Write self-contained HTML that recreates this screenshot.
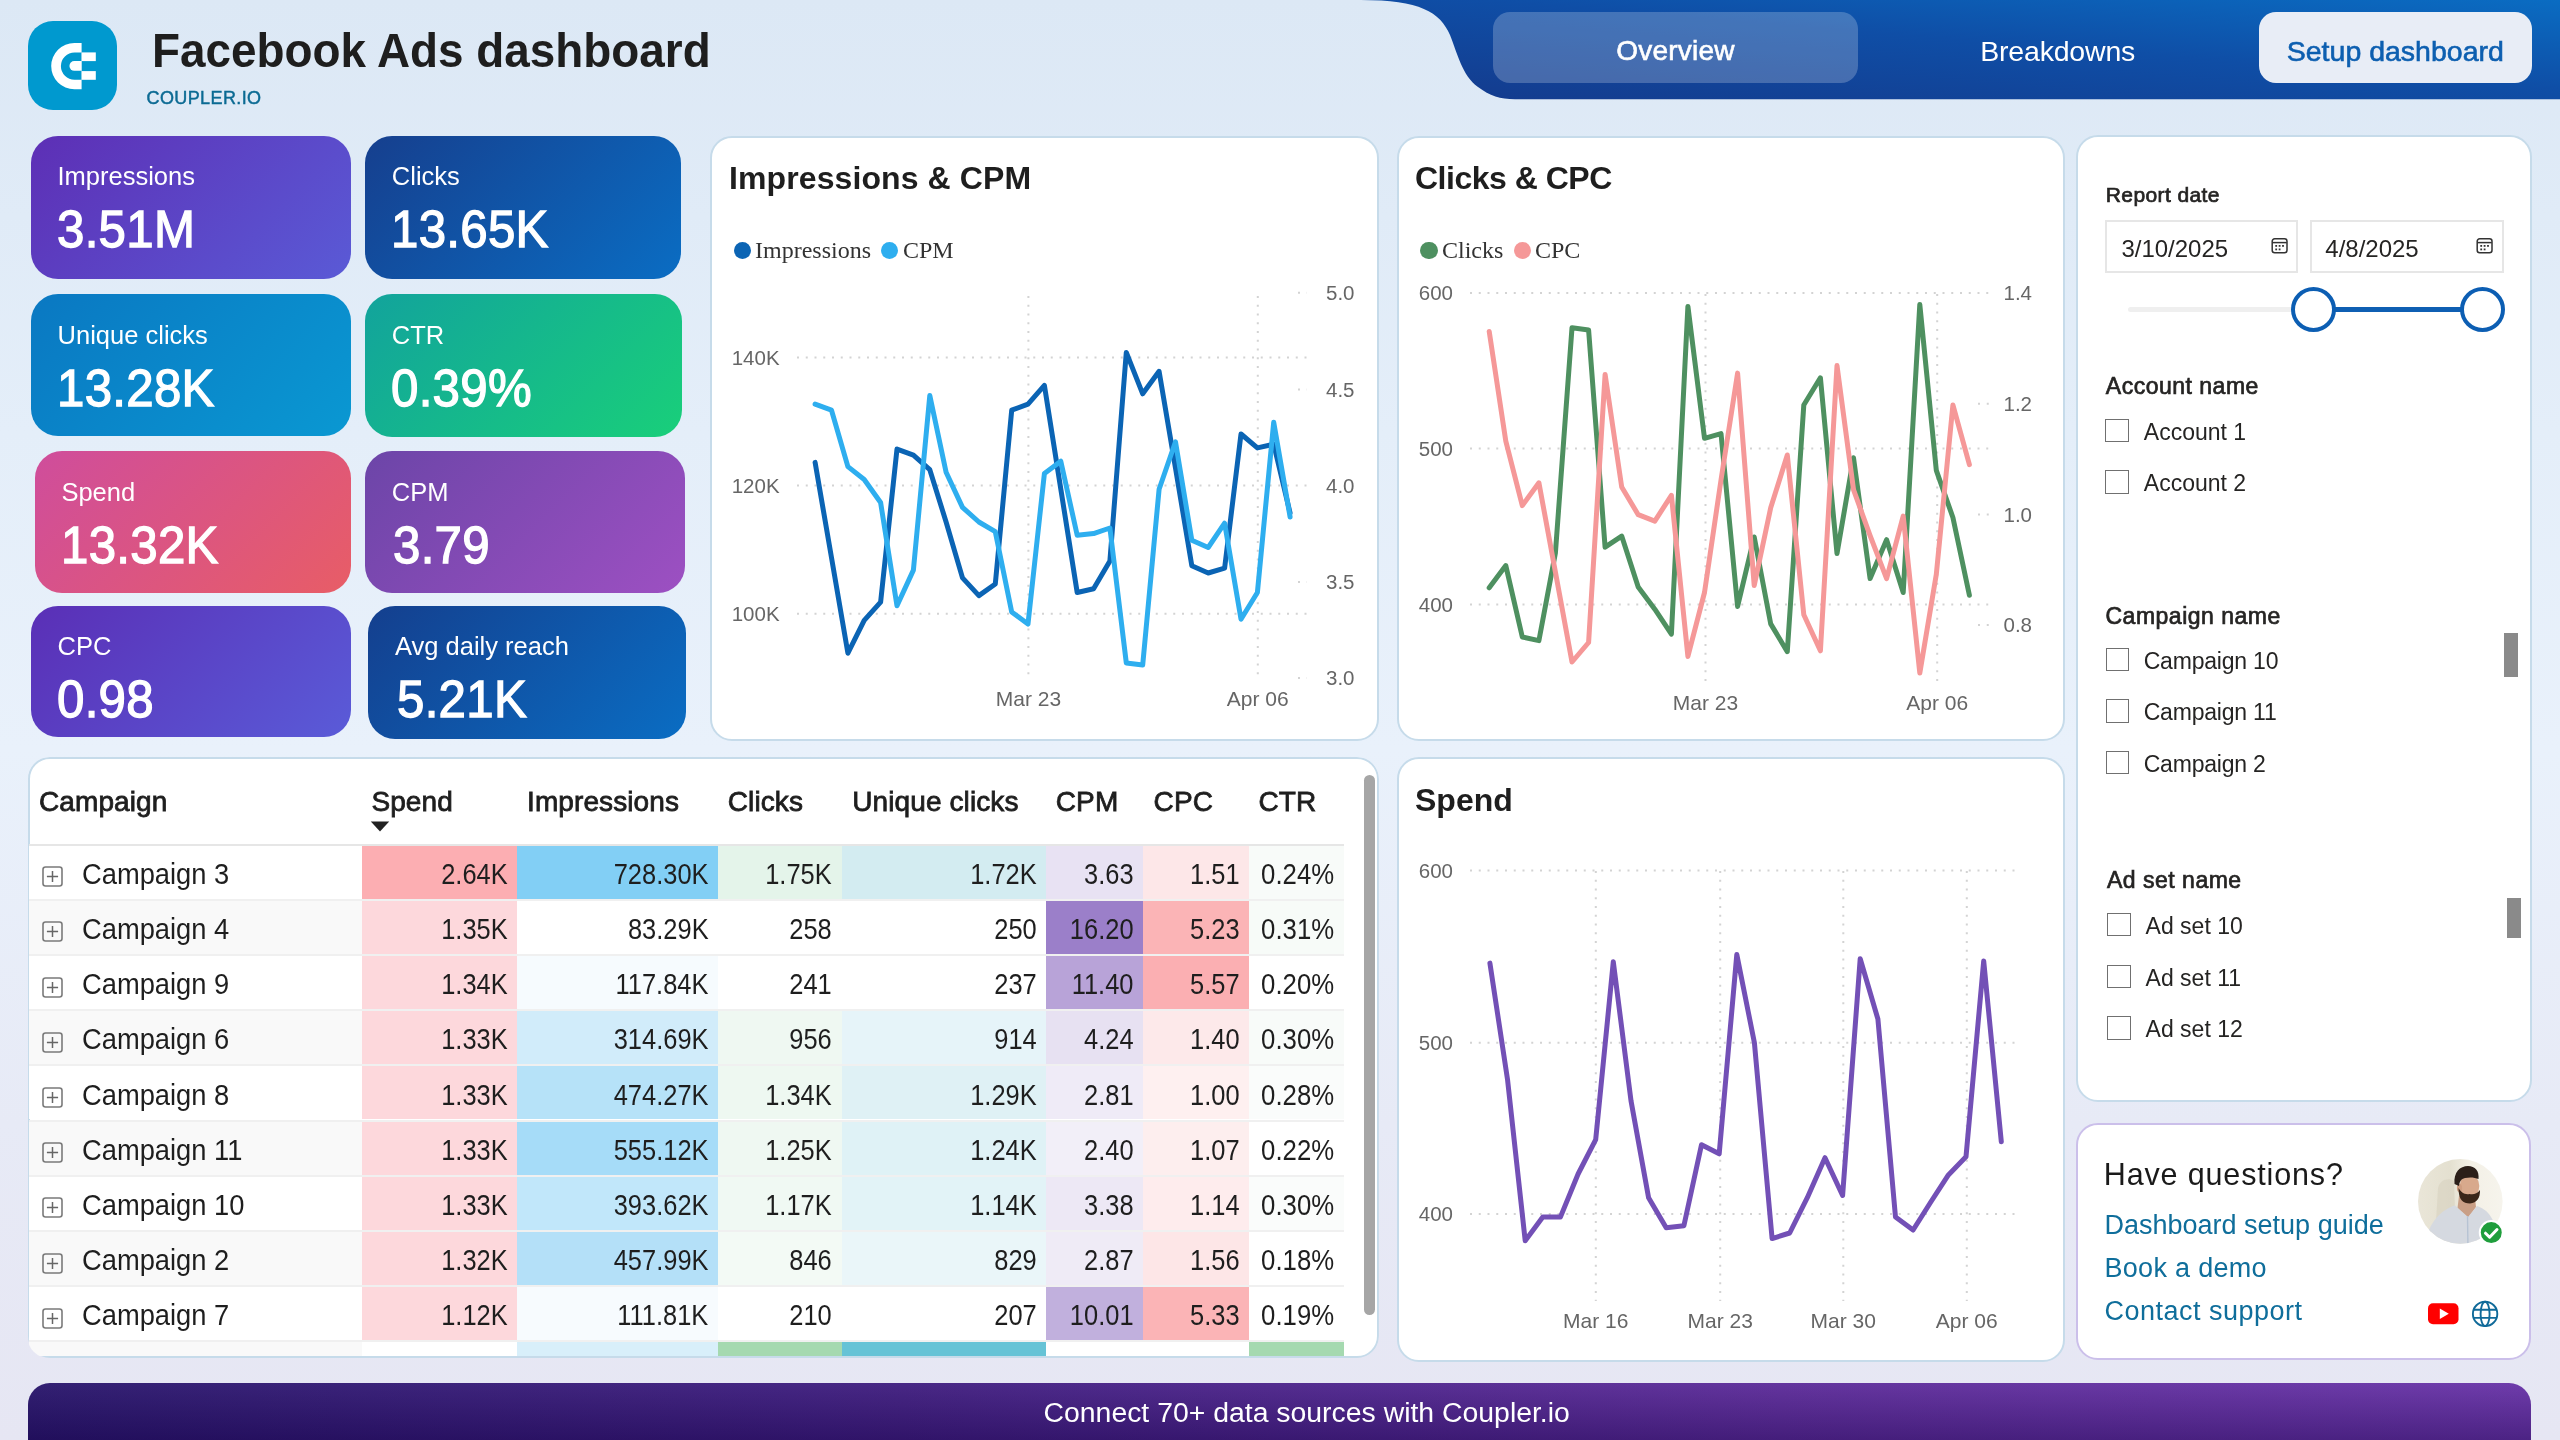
<!DOCTYPE html><html><head><meta charset="utf-8"><style>
html,body{margin:0;padding:0;}
body{width:2560px;height:1440px;overflow:hidden;position:relative;
background:linear-gradient(180deg,#dce8f5 0%,#e4eef9 30%,#e9f1fb 52%,#e7eaf6 78%,#e6e6f3 100%);font-family:"Liberation Sans",sans-serif;}
.t{position:absolute;white-space:nowrap;line-height:1;}
.card{position:absolute;background:#fff;border:2px solid #cde0ef;border-radius:22px;box-sizing:border-box;}
</style></head><body>

<div style="position:absolute;left:0;top:0;width:2560px;height:1440px;overflow:hidden;will-change:transform">
<svg style="position:absolute;left:0;top:0" width="200" height="130" viewBox="0 0 200 130">
<rect x="28" y="21" width="89" height="89" rx="25" fill="#0099cf"/>
<path d="M81.6 42.9 H74.4 A23.2 23.2 0 0 0 74.4 89.3 H81.6 Z" fill="#fff"/>
<path d="M81.6 52.4 H74.6 A13.7 13.7 0 0 0 74.6 79.8 H81.6 Z" fill="#0099cf"/>
<path d="M81.6 61.1 H74.3 A4.85 4.85 0 0 0 74.3 70.8 H81.6 Z" fill="#fff"/>
<rect x="81.6" y="52.4" width="14.2" height="8.7" fill="#fff"/>
<rect x="81.6" y="71.1" width="14.2" height="8.7" fill="#fff"/>
</svg>
<div class="t" style="left:152.0px;top:26.9px;font-size:48px;color:#1e1e1e;font-weight:700;letter-spacing:0px;font-family:'Liberation Sans', sans-serif;transform:scaleX(0.955);transform-origin:left center;">Facebook Ads dashboard</div>
<div class="t" style="left:146.5px;top:88.8px;font-size:18px;color:#0b6a93;font-weight:400;letter-spacing:0.4px;font-family:'Liberation Sans', sans-serif;-webkit-text-stroke:0.45px #0b6a93;">COUPLER.IO</div>
<svg style="position:absolute;left:0;top:0" width="2560" height="110" viewBox="0 0 2560 110">
<defs><linearGradient id="hg" x1="0" y1="1" x2="1" y2="0" gradientUnits="objectBoundingBox">
<stop offset="0" stop-color="#143a8c"/><stop offset="0.55" stop-color="#0f4ea6"/><stop offset="1" stop-color="#0a6cc2"/></linearGradient></defs>
<path d="M1361 0 C1420 0 1440 12 1450 35 C1458 55 1462 75 1478 87 C1490 96 1500 99 1515 99.3 L2560 99.3 L2560 0 Z" fill="url(#hg)"/>
</svg>
<div style="position:absolute;left:1493.0px;top:12.0px;width:365.0px;height:71.0px;border-radius:17px;background:rgba(255,255,255,0.22);"></div>
<div class="t" style="left:1075.5px;width:1200px;text-align:center;top:36.5px;font-size:28px;color:#ffffff;font-weight:400;letter-spacing:0.2px;font-family:'Liberation Sans', sans-serif;-webkit-text-stroke:0.6px #fff;">Overview</div>
<div class="t" style="left:1457.7px;width:1200px;text-align:center;top:36.5px;font-size:28.5px;color:#ffffff;font-weight:400;letter-spacing:-0.2px;font-family:'Liberation Sans', sans-serif;">Breakdowns</div>
<div style="position:absolute;left:2259.0px;top:12.0px;width:273.0px;height:71.0px;border-radius:17px;background:#e8edf6;"></div>
<div class="t" style="left:1795.3px;width:1200px;text-align:center;top:36.5px;font-size:28.5px;color:#0d5fb0;font-weight:400;letter-spacing:0px;font-family:'Liberation Sans', sans-serif;-webkit-text-stroke:0.6px #0d5fb0;">Setup dashboard</div>
<div style="position:absolute;left:31.0px;top:136.0px;width:320.0px;height:143.0px;border-radius:27px;background:linear-gradient(135deg,#5d2fb5 0%,#5a5ad6 100%);"></div>
<div class="t" style="left:57.5px;top:164.0px;font-size:25.5px;color:#ffffff;font-weight:400;letter-spacing:0px;font-family:'Liberation Sans', sans-serif;">Impressions</div>
<div class="t" style="left:57.1px;top:203.2px;font-size:52px;color:#ffffff;font-weight:400;letter-spacing:0.3px;font-family:'Liberation Sans', sans-serif;-webkit-text-stroke:1.3px #fff;transform:scaleX(0.946);transform-origin:left center;">3.51M</div>
<div style="position:absolute;left:364.5px;top:136.0px;width:316.5px;height:143.0px;border-radius:27px;background:linear-gradient(135deg,#163f8e 0%,#0a6dc3 100%);"></div>
<div class="t" style="left:391.8px;top:164.0px;font-size:25.5px;color:#ffffff;font-weight:400;letter-spacing:0px;font-family:'Liberation Sans', sans-serif;">Clicks</div>
<div class="t" style="left:391.3px;top:203.2px;font-size:52px;color:#ffffff;font-weight:400;letter-spacing:0.3px;font-family:'Liberation Sans', sans-serif;-webkit-text-stroke:1.3px #fff;transform:scaleX(0.946);transform-origin:left center;">13.65K</div>
<div style="position:absolute;left:31.0px;top:294.0px;width:320.0px;height:142.0px;border-radius:27px;background:linear-gradient(135deg,#0a78c2 0%,#0a98d2 100%);"></div>
<div class="t" style="left:57.6px;top:322.6px;font-size:25.5px;color:#ffffff;font-weight:400;letter-spacing:0px;font-family:'Liberation Sans', sans-serif;">Unique clicks</div>
<div class="t" style="left:57.1px;top:361.8px;font-size:52px;color:#ffffff;font-weight:400;letter-spacing:0.3px;font-family:'Liberation Sans', sans-serif;-webkit-text-stroke:1.3px #fff;transform:scaleX(0.946);transform-origin:left center;">13.28K</div>
<div style="position:absolute;left:365.0px;top:294.0px;width:317.3px;height:143.0px;border-radius:27px;background:linear-gradient(135deg,#12a39c 0%,#19cf7a 100%);"></div>
<div class="t" style="left:391.8px;top:322.6px;font-size:25.5px;color:#ffffff;font-weight:400;letter-spacing:0px;font-family:'Liberation Sans', sans-serif;">CTR</div>
<div class="t" style="left:391.3px;top:361.8px;font-size:52px;color:#ffffff;font-weight:400;letter-spacing:0.3px;font-family:'Liberation Sans', sans-serif;-webkit-text-stroke:1.3px #fff;transform:scaleX(0.946);transform-origin:left center;">0.39%</div>
<div style="position:absolute;left:34.7px;top:450.5px;width:316.3px;height:142.2px;border-radius:27px;background:linear-gradient(135deg,#cf4d9c 0%,#e85d66 100%);"></div>
<div class="t" style="left:61.4px;top:479.5px;font-size:25.5px;color:#ffffff;font-weight:400;letter-spacing:0px;font-family:'Liberation Sans', sans-serif;">Spend</div>
<div class="t" style="left:60.9px;top:518.6px;font-size:52px;color:#ffffff;font-weight:400;letter-spacing:0.3px;font-family:'Liberation Sans', sans-serif;-webkit-text-stroke:1.3px #fff;transform:scaleX(0.946);transform-origin:left center;">13.32K</div>
<div style="position:absolute;left:365.0px;top:450.5px;width:320.0px;height:142.2px;border-radius:27px;background:linear-gradient(135deg,#6c45a8 0%,#9d50c2 100%);"></div>
<div class="t" style="left:391.8px;top:479.5px;font-size:25.5px;color:#ffffff;font-weight:400;letter-spacing:0px;font-family:'Liberation Sans', sans-serif;">CPM</div>
<div class="t" style="left:392.5px;top:518.6px;font-size:52px;color:#ffffff;font-weight:400;letter-spacing:0.3px;font-family:'Liberation Sans', sans-serif;-webkit-text-stroke:1.3px #fff;transform:scaleX(0.946);transform-origin:left center;">3.79</div>
<div style="position:absolute;left:31.0px;top:606.0px;width:320.0px;height:131.0px;border-radius:27px;background:linear-gradient(135deg,#5a2fb6 0%,#5a5bd8 100%);"></div>
<div class="t" style="left:57.6px;top:634.0px;font-size:25.5px;color:#ffffff;font-weight:400;letter-spacing:0px;font-family:'Liberation Sans', sans-serif;">CPC</div>
<div class="t" style="left:57.1px;top:672.6px;font-size:52px;color:#ffffff;font-weight:400;letter-spacing:0.3px;font-family:'Liberation Sans', sans-serif;-webkit-text-stroke:1.3px #fff;transform:scaleX(0.946);transform-origin:left center;">0.98</div>
<div style="position:absolute;left:368.0px;top:606.0px;width:318.0px;height:133.0px;border-radius:27px;background:linear-gradient(135deg,#143f8e 0%,#0a6dc3 100%);"></div>
<div class="t" style="left:395.0px;top:634.0px;font-size:25.5px;color:#ffffff;font-weight:400;letter-spacing:0px;font-family:'Liberation Sans', sans-serif;">Avg daily reach</div>
<div class="t" style="left:396.5px;top:672.6px;font-size:52px;color:#ffffff;font-weight:400;letter-spacing:0.3px;font-family:'Liberation Sans', sans-serif;-webkit-text-stroke:1.3px #fff;transform:scaleX(0.946);transform-origin:left center;">5.21K</div>
<div style="position:absolute;left:710.3px;top:135.7px;width:668.4px;height:604.9px;background:#fff;border:2px solid #c6dbea;border-radius:22px;box-sizing:border-box;"></div>
<div class="t" style="left:729.0px;top:161.9px;font-size:32px;color:#1e1e1e;font-weight:700;letter-spacing:0.1px;font-family:'Liberation Sans', sans-serif;">Impressions &amp; CPM</div>
<div style="position:absolute;left:733.6px;top:241.9px;width:17.2px;height:17.2px;border-radius:50%;background:#0b64b4;"></div>
<div class="t" style="left:755.0px;top:238.0px;font-size:24px;color:#333;font-weight:400;letter-spacing:0px;font-family:'Liberation Serif', serif;">Impressions</div>
<div style="position:absolute;left:880.8px;top:241.9px;width:17.2px;height:17.2px;border-radius:50%;background:#2eaeef;"></div>
<div class="t" style="left:903.0px;top:238.0px;font-size:24px;color:#333;font-weight:400;letter-spacing:0px;font-family:'Liberation Serif', serif;">CPM</div>
<div class="t" style="right:1780.4px;top:347.6px;font-size:20.5px;color:#666666;font-weight:400;letter-spacing:0px;font-family:'Liberation Sans', sans-serif;">140K</div>
<div class="t" style="right:1780.4px;top:475.6px;font-size:20.5px;color:#666666;font-weight:400;letter-spacing:0px;font-family:'Liberation Sans', sans-serif;">120K</div>
<div class="t" style="right:1780.4px;top:603.9px;font-size:20.5px;color:#666666;font-weight:400;letter-spacing:0px;font-family:'Liberation Sans', sans-serif;">100K</div>
<div class="t" style="left:1326.0px;top:282.8px;font-size:20.5px;color:#666666;font-weight:400;letter-spacing:0px;font-family:'Liberation Sans', sans-serif;">5.0</div>
<div class="t" style="left:1326.0px;top:379.7px;font-size:20.5px;color:#666666;font-weight:400;letter-spacing:0px;font-family:'Liberation Sans', sans-serif;">4.5</div>
<div class="t" style="left:1326.0px;top:475.7px;font-size:20.5px;color:#666666;font-weight:400;letter-spacing:0px;font-family:'Liberation Sans', sans-serif;">4.0</div>
<div class="t" style="left:1326.0px;top:572.1px;font-size:20.5px;color:#666666;font-weight:400;letter-spacing:0px;font-family:'Liberation Sans', sans-serif;">3.5</div>
<div class="t" style="left:1326.0px;top:668.1px;font-size:20.5px;color:#666666;font-weight:400;letter-spacing:0px;font-family:'Liberation Sans', sans-serif;">3.0</div>
<div class="t" style="left:428.4px;width:1200px;text-align:center;top:688.2px;font-size:21px;color:#666666;font-weight:400;letter-spacing:0px;font-family:'Liberation Sans', sans-serif;">Mar 23</div>
<div class="t" style="left:657.8px;width:1200px;text-align:center;top:688.2px;font-size:21px;color:#666666;font-weight:400;letter-spacing:0px;font-family:'Liberation Sans', sans-serif;">Apr 06</div>
<div style="position:absolute;left:1396.7px;top:135.7px;width:668.8px;height:604.9px;background:#fff;border:2px solid #c6dbea;border-radius:22px;box-sizing:border-box;"></div>
<div class="t" style="left:1415.0px;top:161.9px;font-size:32px;color:#1e1e1e;font-weight:700;letter-spacing:-0.5px;font-family:'Liberation Sans', sans-serif;">Clicks &amp; CPC</div>
<div style="position:absolute;left:1420.4px;top:241.9px;width:17.2px;height:17.2px;border-radius:50%;background:#4e9060;"></div>
<div class="t" style="left:1442.0px;top:238.0px;font-size:24px;color:#333;font-weight:400;letter-spacing:0px;font-family:'Liberation Serif', serif;">Clicks</div>
<div style="position:absolute;left:1513.7px;top:241.9px;width:17.2px;height:17.2px;border-radius:50%;background:#f59898;"></div>
<div class="t" style="left:1535.0px;top:238.0px;font-size:24px;color:#333;font-weight:400;letter-spacing:0px;font-family:'Liberation Serif', serif;">CPC</div>
<div class="t" style="right:1107.0px;top:283.1px;font-size:20.5px;color:#666666;font-weight:400;letter-spacing:0px;font-family:'Liberation Sans', sans-serif;">600</div>
<div class="t" style="right:1107.0px;top:438.7px;font-size:20.5px;color:#666666;font-weight:400;letter-spacing:0px;font-family:'Liberation Sans', sans-serif;">500</div>
<div class="t" style="right:1107.0px;top:594.5px;font-size:20.5px;color:#666666;font-weight:400;letter-spacing:0px;font-family:'Liberation Sans', sans-serif;">400</div>
<div class="t" style="right:528.0px;top:282.8px;font-size:20.5px;color:#666666;font-weight:400;letter-spacing:0px;font-family:'Liberation Sans', sans-serif;">1.4</div>
<div class="t" style="right:528.0px;top:393.9px;font-size:20.5px;color:#666666;font-weight:400;letter-spacing:0px;font-family:'Liberation Sans', sans-serif;">1.2</div>
<div class="t" style="right:528.0px;top:504.5px;font-size:20.5px;color:#666666;font-weight:400;letter-spacing:0px;font-family:'Liberation Sans', sans-serif;">1.0</div>
<div class="t" style="right:528.0px;top:615.1px;font-size:20.5px;color:#666666;font-weight:400;letter-spacing:0px;font-family:'Liberation Sans', sans-serif;">0.8</div>
<div class="t" style="left:1105.5px;width:1200px;text-align:center;top:692.2px;font-size:21px;color:#666666;font-weight:400;letter-spacing:0px;font-family:'Liberation Sans', sans-serif;">Mar 23</div>
<div class="t" style="left:1337.2px;width:1200px;text-align:center;top:692.2px;font-size:21px;color:#666666;font-weight:400;letter-spacing:0px;font-family:'Liberation Sans', sans-serif;">Apr 06</div>
<div style="position:absolute;left:1396.7px;top:756.9px;width:668.8px;height:604.7px;background:#fff;border:2px solid #c6dbea;border-radius:22px;box-sizing:border-box;"></div>
<div class="t" style="left:1415.0px;top:783.9px;font-size:32px;color:#1e1e1e;font-weight:700;letter-spacing:0px;font-family:'Liberation Sans', sans-serif;">Spend</div>
<div class="t" style="right:1107.0px;top:860.6px;font-size:20.5px;color:#666666;font-weight:400;letter-spacing:0px;font-family:'Liberation Sans', sans-serif;">600</div>
<div class="t" style="right:1107.0px;top:1032.8px;font-size:20.5px;color:#666666;font-weight:400;letter-spacing:0px;font-family:'Liberation Sans', sans-serif;">500</div>
<div class="t" style="right:1107.0px;top:1204.1px;font-size:20.5px;color:#666666;font-weight:400;letter-spacing:0px;font-family:'Liberation Sans', sans-serif;">400</div>
<div class="t" style="left:995.8px;width:1200px;text-align:center;top:1310.2px;font-size:21px;color:#666666;font-weight:400;letter-spacing:0px;font-family:'Liberation Sans', sans-serif;">Mar 16</div>
<div class="t" style="left:1120.2px;width:1200px;text-align:center;top:1310.2px;font-size:21px;color:#666666;font-weight:400;letter-spacing:0px;font-family:'Liberation Sans', sans-serif;">Mar 23</div>
<div class="t" style="left:1243.3px;width:1200px;text-align:center;top:1310.2px;font-size:21px;color:#666666;font-weight:400;letter-spacing:0px;font-family:'Liberation Sans', sans-serif;">Mar 30</div>
<div class="t" style="left:1366.8px;width:1200px;text-align:center;top:1310.2px;font-size:21px;color:#666666;font-weight:400;letter-spacing:0px;font-family:'Liberation Sans', sans-serif;">Apr 06</div>
<div style="position:absolute;left:0;top:0;width:2560px;height:1440px;clip-path:inset(756.9px 1181.1px 81.5px 27.5px round 22px)">
<div style="position:absolute;left:27.5px;top:756.9px;width:1351.4px;height:601.6px;background:#fff;border:2px solid #c6dbea;border-radius:22px;box-sizing:border-box;"></div>
<div class="t" style="left:39.0px;top:787.8px;font-size:28px;color:#1e1e1e;font-weight:400;letter-spacing:0.1px;font-family:'Liberation Sans', sans-serif;-webkit-text-stroke:0.8px #1e1e1e;">Campaign</div>
<div class="t" style="left:371.4px;top:787.8px;font-size:28px;color:#1e1e1e;font-weight:400;letter-spacing:0.1px;font-family:'Liberation Sans', sans-serif;-webkit-text-stroke:0.8px #1e1e1e;">Spend</div>
<div class="t" style="left:527.0px;top:787.8px;font-size:28px;color:#1e1e1e;font-weight:400;letter-spacing:0.1px;font-family:'Liberation Sans', sans-serif;-webkit-text-stroke:0.8px #1e1e1e;">Impressions</div>
<div class="t" style="left:727.8px;top:787.8px;font-size:28px;color:#1e1e1e;font-weight:400;letter-spacing:0.1px;font-family:'Liberation Sans', sans-serif;-webkit-text-stroke:0.8px #1e1e1e;">Clicks</div>
<div class="t" style="left:852.3px;top:787.8px;font-size:28px;color:#1e1e1e;font-weight:400;letter-spacing:0.1px;font-family:'Liberation Sans', sans-serif;-webkit-text-stroke:0.8px #1e1e1e;">Unique clicks</div>
<div class="t" style="left:1055.8px;top:787.8px;font-size:28px;color:#1e1e1e;font-weight:400;letter-spacing:0.1px;font-family:'Liberation Sans', sans-serif;-webkit-text-stroke:0.8px #1e1e1e;">CPM</div>
<div class="t" style="left:1153.6px;top:787.8px;font-size:28px;color:#1e1e1e;font-weight:400;letter-spacing:0.1px;font-family:'Liberation Sans', sans-serif;-webkit-text-stroke:0.8px #1e1e1e;">CPC</div>
<div class="t" style="left:1258.5px;top:787.8px;font-size:28px;color:#1e1e1e;font-weight:400;letter-spacing:0.1px;font-family:'Liberation Sans', sans-serif;-webkit-text-stroke:0.8px #1e1e1e;">CTR</div>
<svg style="position:absolute;left:369px;top:819px" width="22" height="16" viewBox="0 0 22 16"><path d="M1.8 2.6 H20.2 L11 12.6 Z" fill="#222"/></svg>
<div style="position:absolute;left:29.0px;top:843.5px;width:1315.0px;height:2.0px;background:#e6e6e6;"></div>
<div style="position:absolute;left:29.0px;top:845.5px;width:333.0px;height:53.2px;background:#ffffff;"></div>
<div style="position:absolute;left:362.0px;top:845.5px;width:155.0px;height:53.2px;background:#fcaeb2;"></div>
<div style="position:absolute;left:517.0px;top:845.5px;width:201.0px;height:53.2px;background:#82cff5;"></div>
<div style="position:absolute;left:718.0px;top:845.5px;width:123.5px;height:53.2px;background:#e4f4ea;"></div>
<div style="position:absolute;left:841.5px;top:845.5px;width:204.5px;height:53.2px;background:#d3ecf1;"></div>
<div style="position:absolute;left:1046.0px;top:845.5px;width:97.4px;height:53.2px;background:#e8e2f3;"></div>
<div style="position:absolute;left:1143.4px;top:845.5px;width:105.6px;height:53.2px;background:#fde7e8;"></div>
<div style="position:absolute;left:1249.0px;top:845.5px;width:95.0px;height:53.2px;background:#f8fbf9;"></div>
<div style="position:absolute;left:29.0px;top:898.7px;width:1315.0px;height:2.0px;background:#f0f0f0;"></div>
<svg style="position:absolute;left:42px;top:866.1px" width="22" height="22" viewBox="0 0 22 22"><rect x="1" y="1" width="19" height="19" rx="2.5" fill="none" stroke="#7a7a7a" stroke-width="1.6"/><path d="M10.5 4.9 V16.1 M4.9 10.5 H16.1" stroke="#666" stroke-width="1.5"/></svg>
<div class="t" style="left:81.5px;top:859.8px;font-size:28.6px;color:#1e1e1e;font-weight:400;letter-spacing:0px;font-family:'Liberation Sans', sans-serif;transform:scaleX(0.955);transform-origin:left center;">Campaign 3</div>
<div class="t" style="right:2052.5px;top:859.8px;font-size:28.6px;color:#1e1e1e;font-weight:400;letter-spacing:0px;font-family:'Liberation Sans', sans-serif;transform:scaleX(0.89);transform-origin:right center;">2.64K</div>
<div class="t" style="right:1851.5px;top:859.8px;font-size:28.6px;color:#1e1e1e;font-weight:400;letter-spacing:0px;font-family:'Liberation Sans', sans-serif;transform:scaleX(0.89);transform-origin:right center;">728.30K</div>
<div class="t" style="right:1728.0px;top:859.8px;font-size:28.6px;color:#1e1e1e;font-weight:400;letter-spacing:0px;font-family:'Liberation Sans', sans-serif;transform:scaleX(0.89);transform-origin:right center;">1.75K</div>
<div class="t" style="right:1523.5px;top:859.8px;font-size:28.6px;color:#1e1e1e;font-weight:400;letter-spacing:0px;font-family:'Liberation Sans', sans-serif;transform:scaleX(0.89);transform-origin:right center;">1.72K</div>
<div class="t" style="right:1426.1px;top:859.8px;font-size:28.6px;color:#1e1e1e;font-weight:400;letter-spacing:0px;font-family:'Liberation Sans', sans-serif;transform:scaleX(0.89);transform-origin:right center;">3.63</div>
<div class="t" style="right:1320.5px;top:859.8px;font-size:28.6px;color:#1e1e1e;font-weight:400;letter-spacing:0px;font-family:'Liberation Sans', sans-serif;transform:scaleX(0.89);transform-origin:right center;">1.51</div>
<div class="t" style="right:1226.0px;top:859.8px;font-size:28.6px;color:#1e1e1e;font-weight:400;letter-spacing:0px;font-family:'Liberation Sans', sans-serif;transform:scaleX(0.9);transform-origin:right center;">0.24%</div>
<div style="position:absolute;left:29.0px;top:900.7px;width:333.0px;height:53.2px;background:#f9f9f9;"></div>
<div style="position:absolute;left:362.0px;top:900.7px;width:155.0px;height:53.2px;background:#fdd8dc;"></div>
<div style="position:absolute;left:517.0px;top:900.7px;width:201.0px;height:53.2px;background:#ffffff;"></div>
<div style="position:absolute;left:718.0px;top:900.7px;width:123.5px;height:53.2px;background:#ffffff;"></div>
<div style="position:absolute;left:841.5px;top:900.7px;width:204.5px;height:53.2px;background:#ffffff;"></div>
<div style="position:absolute;left:1046.0px;top:900.7px;width:97.4px;height:53.2px;background:#9b7fc9;"></div>
<div style="position:absolute;left:1143.4px;top:900.7px;width:105.6px;height:53.2px;background:#fbb4b6;"></div>
<div style="position:absolute;left:1249.0px;top:900.7px;width:95.0px;height:53.2px;background:#f7fbf8;"></div>
<div style="position:absolute;left:29.0px;top:953.9px;width:1315.0px;height:2.0px;background:#f0f0f0;"></div>
<svg style="position:absolute;left:42px;top:921.3px" width="22" height="22" viewBox="0 0 22 22"><rect x="1" y="1" width="19" height="19" rx="2.5" fill="none" stroke="#7a7a7a" stroke-width="1.6"/><path d="M10.5 4.9 V16.1 M4.9 10.5 H16.1" stroke="#666" stroke-width="1.5"/></svg>
<div class="t" style="left:81.5px;top:915.0px;font-size:28.6px;color:#1e1e1e;font-weight:400;letter-spacing:0px;font-family:'Liberation Sans', sans-serif;transform:scaleX(0.955);transform-origin:left center;">Campaign 4</div>
<div class="t" style="right:2052.5px;top:915.0px;font-size:28.6px;color:#1e1e1e;font-weight:400;letter-spacing:0px;font-family:'Liberation Sans', sans-serif;transform:scaleX(0.89);transform-origin:right center;">1.35K</div>
<div class="t" style="right:1851.5px;top:915.0px;font-size:28.6px;color:#1e1e1e;font-weight:400;letter-spacing:0px;font-family:'Liberation Sans', sans-serif;transform:scaleX(0.89);transform-origin:right center;">83.29K</div>
<div class="t" style="right:1728.0px;top:915.0px;font-size:28.6px;color:#1e1e1e;font-weight:400;letter-spacing:0px;font-family:'Liberation Sans', sans-serif;transform:scaleX(0.89);transform-origin:right center;">258</div>
<div class="t" style="right:1523.5px;top:915.0px;font-size:28.6px;color:#1e1e1e;font-weight:400;letter-spacing:0px;font-family:'Liberation Sans', sans-serif;transform:scaleX(0.89);transform-origin:right center;">250</div>
<div class="t" style="right:1426.1px;top:915.0px;font-size:28.6px;color:#1e1e1e;font-weight:400;letter-spacing:0px;font-family:'Liberation Sans', sans-serif;transform:scaleX(0.89);transform-origin:right center;">16.20</div>
<div class="t" style="right:1320.5px;top:915.0px;font-size:28.6px;color:#1e1e1e;font-weight:400;letter-spacing:0px;font-family:'Liberation Sans', sans-serif;transform:scaleX(0.89);transform-origin:right center;">5.23</div>
<div class="t" style="right:1226.0px;top:915.0px;font-size:28.6px;color:#1e1e1e;font-weight:400;letter-spacing:0px;font-family:'Liberation Sans', sans-serif;transform:scaleX(0.9);transform-origin:right center;">0.31%</div>
<div style="position:absolute;left:29.0px;top:955.9px;width:333.0px;height:53.2px;background:#ffffff;"></div>
<div style="position:absolute;left:362.0px;top:955.9px;width:155.0px;height:53.2px;background:#fdd8dc;"></div>
<div style="position:absolute;left:517.0px;top:955.9px;width:201.0px;height:53.2px;background:#f6fbfe;"></div>
<div style="position:absolute;left:718.0px;top:955.9px;width:123.5px;height:53.2px;background:#ffffff;"></div>
<div style="position:absolute;left:841.5px;top:955.9px;width:204.5px;height:53.2px;background:#ffffff;"></div>
<div style="position:absolute;left:1046.0px;top:955.9px;width:97.4px;height:53.2px;background:#b8a3d8;"></div>
<div style="position:absolute;left:1143.4px;top:955.9px;width:105.6px;height:53.2px;background:#fbafb2;"></div>
<div style="position:absolute;left:1249.0px;top:955.9px;width:95.0px;height:53.2px;background:#ffffff;"></div>
<div style="position:absolute;left:29.0px;top:1009.1px;width:1315.0px;height:2.0px;background:#f0f0f0;"></div>
<svg style="position:absolute;left:42px;top:976.5px" width="22" height="22" viewBox="0 0 22 22"><rect x="1" y="1" width="19" height="19" rx="2.5" fill="none" stroke="#7a7a7a" stroke-width="1.6"/><path d="M10.5 4.9 V16.1 M4.9 10.5 H16.1" stroke="#666" stroke-width="1.5"/></svg>
<div class="t" style="left:81.5px;top:970.2px;font-size:28.6px;color:#1e1e1e;font-weight:400;letter-spacing:0px;font-family:'Liberation Sans', sans-serif;transform:scaleX(0.955);transform-origin:left center;">Campaign 9</div>
<div class="t" style="right:2052.5px;top:970.2px;font-size:28.6px;color:#1e1e1e;font-weight:400;letter-spacing:0px;font-family:'Liberation Sans', sans-serif;transform:scaleX(0.89);transform-origin:right center;">1.34K</div>
<div class="t" style="right:1851.5px;top:970.2px;font-size:28.6px;color:#1e1e1e;font-weight:400;letter-spacing:0px;font-family:'Liberation Sans', sans-serif;transform:scaleX(0.89);transform-origin:right center;">117.84K</div>
<div class="t" style="right:1728.0px;top:970.2px;font-size:28.6px;color:#1e1e1e;font-weight:400;letter-spacing:0px;font-family:'Liberation Sans', sans-serif;transform:scaleX(0.89);transform-origin:right center;">241</div>
<div class="t" style="right:1523.5px;top:970.2px;font-size:28.6px;color:#1e1e1e;font-weight:400;letter-spacing:0px;font-family:'Liberation Sans', sans-serif;transform:scaleX(0.89);transform-origin:right center;">237</div>
<div class="t" style="right:1426.1px;top:970.2px;font-size:28.6px;color:#1e1e1e;font-weight:400;letter-spacing:0px;font-family:'Liberation Sans', sans-serif;transform:scaleX(0.89);transform-origin:right center;">11.40</div>
<div class="t" style="right:1320.5px;top:970.2px;font-size:28.6px;color:#1e1e1e;font-weight:400;letter-spacing:0px;font-family:'Liberation Sans', sans-serif;transform:scaleX(0.89);transform-origin:right center;">5.57</div>
<div class="t" style="right:1226.0px;top:970.2px;font-size:28.6px;color:#1e1e1e;font-weight:400;letter-spacing:0px;font-family:'Liberation Sans', sans-serif;transform:scaleX(0.9);transform-origin:right center;">0.20%</div>
<div style="position:absolute;left:29.0px;top:1011.1px;width:333.0px;height:53.2px;background:#f9f9f9;"></div>
<div style="position:absolute;left:362.0px;top:1011.1px;width:155.0px;height:53.2px;background:#fdd8dc;"></div>
<div style="position:absolute;left:517.0px;top:1011.1px;width:201.0px;height:53.2px;background:#d1ecfa;"></div>
<div style="position:absolute;left:718.0px;top:1011.1px;width:123.5px;height:53.2px;background:#eff8f2;"></div>
<div style="position:absolute;left:841.5px;top:1011.1px;width:204.5px;height:53.2px;background:#e6f4f9;"></div>
<div style="position:absolute;left:1046.0px;top:1011.1px;width:97.4px;height:53.2px;background:#e7e1f2;"></div>
<div style="position:absolute;left:1143.4px;top:1011.1px;width:105.6px;height:53.2px;background:#fde9ea;"></div>
<div style="position:absolute;left:1249.0px;top:1011.1px;width:95.0px;height:53.2px;background:#f8fbf9;"></div>
<div style="position:absolute;left:29.0px;top:1064.3px;width:1315.0px;height:2.0px;background:#f0f0f0;"></div>
<svg style="position:absolute;left:42px;top:1031.7px" width="22" height="22" viewBox="0 0 22 22"><rect x="1" y="1" width="19" height="19" rx="2.5" fill="none" stroke="#7a7a7a" stroke-width="1.6"/><path d="M10.5 4.9 V16.1 M4.9 10.5 H16.1" stroke="#666" stroke-width="1.5"/></svg>
<div class="t" style="left:81.5px;top:1025.4px;font-size:28.6px;color:#1e1e1e;font-weight:400;letter-spacing:0px;font-family:'Liberation Sans', sans-serif;transform:scaleX(0.955);transform-origin:left center;">Campaign 6</div>
<div class="t" style="right:2052.5px;top:1025.4px;font-size:28.6px;color:#1e1e1e;font-weight:400;letter-spacing:0px;font-family:'Liberation Sans', sans-serif;transform:scaleX(0.89);transform-origin:right center;">1.33K</div>
<div class="t" style="right:1851.5px;top:1025.4px;font-size:28.6px;color:#1e1e1e;font-weight:400;letter-spacing:0px;font-family:'Liberation Sans', sans-serif;transform:scaleX(0.89);transform-origin:right center;">314.69K</div>
<div class="t" style="right:1728.0px;top:1025.4px;font-size:28.6px;color:#1e1e1e;font-weight:400;letter-spacing:0px;font-family:'Liberation Sans', sans-serif;transform:scaleX(0.89);transform-origin:right center;">956</div>
<div class="t" style="right:1523.5px;top:1025.4px;font-size:28.6px;color:#1e1e1e;font-weight:400;letter-spacing:0px;font-family:'Liberation Sans', sans-serif;transform:scaleX(0.89);transform-origin:right center;">914</div>
<div class="t" style="right:1426.1px;top:1025.4px;font-size:28.6px;color:#1e1e1e;font-weight:400;letter-spacing:0px;font-family:'Liberation Sans', sans-serif;transform:scaleX(0.89);transform-origin:right center;">4.24</div>
<div class="t" style="right:1320.5px;top:1025.4px;font-size:28.6px;color:#1e1e1e;font-weight:400;letter-spacing:0px;font-family:'Liberation Sans', sans-serif;transform:scaleX(0.89);transform-origin:right center;">1.40</div>
<div class="t" style="right:1226.0px;top:1025.4px;font-size:28.6px;color:#1e1e1e;font-weight:400;letter-spacing:0px;font-family:'Liberation Sans', sans-serif;transform:scaleX(0.9);transform-origin:right center;">0.30%</div>
<div style="position:absolute;left:29.0px;top:1066.3px;width:333.0px;height:53.2px;background:#ffffff;"></div>
<div style="position:absolute;left:362.0px;top:1066.3px;width:155.0px;height:53.2px;background:#fdd8dc;"></div>
<div style="position:absolute;left:517.0px;top:1066.3px;width:201.0px;height:53.2px;background:#b6e2f8;"></div>
<div style="position:absolute;left:718.0px;top:1066.3px;width:123.5px;height:53.2px;background:#eef8f1;"></div>
<div style="position:absolute;left:841.5px;top:1066.3px;width:204.5px;height:53.2px;background:#dff1f5;"></div>
<div style="position:absolute;left:1046.0px;top:1066.3px;width:97.4px;height:53.2px;background:#efebf7;"></div>
<div style="position:absolute;left:1143.4px;top:1066.3px;width:105.6px;height:53.2px;background:#fef0f0;"></div>
<div style="position:absolute;left:1249.0px;top:1066.3px;width:95.0px;height:53.2px;background:#fafcfb;"></div>
<div style="position:absolute;left:29.0px;top:1119.5px;width:1315.0px;height:2.0px;background:#f0f0f0;"></div>
<svg style="position:absolute;left:42px;top:1086.9px" width="22" height="22" viewBox="0 0 22 22"><rect x="1" y="1" width="19" height="19" rx="2.5" fill="none" stroke="#7a7a7a" stroke-width="1.6"/><path d="M10.5 4.9 V16.1 M4.9 10.5 H16.1" stroke="#666" stroke-width="1.5"/></svg>
<div class="t" style="left:81.5px;top:1080.6px;font-size:28.6px;color:#1e1e1e;font-weight:400;letter-spacing:0px;font-family:'Liberation Sans', sans-serif;transform:scaleX(0.955);transform-origin:left center;">Campaign 8</div>
<div class="t" style="right:2052.5px;top:1080.6px;font-size:28.6px;color:#1e1e1e;font-weight:400;letter-spacing:0px;font-family:'Liberation Sans', sans-serif;transform:scaleX(0.89);transform-origin:right center;">1.33K</div>
<div class="t" style="right:1851.5px;top:1080.6px;font-size:28.6px;color:#1e1e1e;font-weight:400;letter-spacing:0px;font-family:'Liberation Sans', sans-serif;transform:scaleX(0.89);transform-origin:right center;">474.27K</div>
<div class="t" style="right:1728.0px;top:1080.6px;font-size:28.6px;color:#1e1e1e;font-weight:400;letter-spacing:0px;font-family:'Liberation Sans', sans-serif;transform:scaleX(0.89);transform-origin:right center;">1.34K</div>
<div class="t" style="right:1523.5px;top:1080.6px;font-size:28.6px;color:#1e1e1e;font-weight:400;letter-spacing:0px;font-family:'Liberation Sans', sans-serif;transform:scaleX(0.89);transform-origin:right center;">1.29K</div>
<div class="t" style="right:1426.1px;top:1080.6px;font-size:28.6px;color:#1e1e1e;font-weight:400;letter-spacing:0px;font-family:'Liberation Sans', sans-serif;transform:scaleX(0.89);transform-origin:right center;">2.81</div>
<div class="t" style="right:1320.5px;top:1080.6px;font-size:28.6px;color:#1e1e1e;font-weight:400;letter-spacing:0px;font-family:'Liberation Sans', sans-serif;transform:scaleX(0.89);transform-origin:right center;">1.00</div>
<div class="t" style="right:1226.0px;top:1080.6px;font-size:28.6px;color:#1e1e1e;font-weight:400;letter-spacing:0px;font-family:'Liberation Sans', sans-serif;transform:scaleX(0.9);transform-origin:right center;">0.28%</div>
<div style="position:absolute;left:29.0px;top:1121.5px;width:333.0px;height:53.2px;background:#f9f9f9;"></div>
<div style="position:absolute;left:362.0px;top:1121.5px;width:155.0px;height:53.2px;background:#fdd8dc;"></div>
<div style="position:absolute;left:517.0px;top:1121.5px;width:201.0px;height:53.2px;background:#a6dcf8;"></div>
<div style="position:absolute;left:718.0px;top:1121.5px;width:123.5px;height:53.2px;background:#eff8f2;"></div>
<div style="position:absolute;left:841.5px;top:1121.5px;width:204.5px;height:53.2px;background:#dff2f6;"></div>
<div style="position:absolute;left:1046.0px;top:1121.5px;width:97.4px;height:53.2px;background:#f2eff8;"></div>
<div style="position:absolute;left:1143.4px;top:1121.5px;width:105.6px;height:53.2px;background:#fdeeee;"></div>
<div style="position:absolute;left:1249.0px;top:1121.5px;width:95.0px;height:53.2px;background:#ffffff;"></div>
<div style="position:absolute;left:29.0px;top:1174.7px;width:1315.0px;height:2.0px;background:#f0f0f0;"></div>
<svg style="position:absolute;left:42px;top:1142.1px" width="22" height="22" viewBox="0 0 22 22"><rect x="1" y="1" width="19" height="19" rx="2.5" fill="none" stroke="#7a7a7a" stroke-width="1.6"/><path d="M10.5 4.9 V16.1 M4.9 10.5 H16.1" stroke="#666" stroke-width="1.5"/></svg>
<div class="t" style="left:81.5px;top:1135.8px;font-size:28.6px;color:#1e1e1e;font-weight:400;letter-spacing:0px;font-family:'Liberation Sans', sans-serif;transform:scaleX(0.955);transform-origin:left center;">Campaign 11</div>
<div class="t" style="right:2052.5px;top:1135.8px;font-size:28.6px;color:#1e1e1e;font-weight:400;letter-spacing:0px;font-family:'Liberation Sans', sans-serif;transform:scaleX(0.89);transform-origin:right center;">1.33K</div>
<div class="t" style="right:1851.5px;top:1135.8px;font-size:28.6px;color:#1e1e1e;font-weight:400;letter-spacing:0px;font-family:'Liberation Sans', sans-serif;transform:scaleX(0.89);transform-origin:right center;">555.12K</div>
<div class="t" style="right:1728.0px;top:1135.8px;font-size:28.6px;color:#1e1e1e;font-weight:400;letter-spacing:0px;font-family:'Liberation Sans', sans-serif;transform:scaleX(0.89);transform-origin:right center;">1.25K</div>
<div class="t" style="right:1523.5px;top:1135.8px;font-size:28.6px;color:#1e1e1e;font-weight:400;letter-spacing:0px;font-family:'Liberation Sans', sans-serif;transform:scaleX(0.89);transform-origin:right center;">1.24K</div>
<div class="t" style="right:1426.1px;top:1135.8px;font-size:28.6px;color:#1e1e1e;font-weight:400;letter-spacing:0px;font-family:'Liberation Sans', sans-serif;transform:scaleX(0.89);transform-origin:right center;">2.40</div>
<div class="t" style="right:1320.5px;top:1135.8px;font-size:28.6px;color:#1e1e1e;font-weight:400;letter-spacing:0px;font-family:'Liberation Sans', sans-serif;transform:scaleX(0.89);transform-origin:right center;">1.07</div>
<div class="t" style="right:1226.0px;top:1135.8px;font-size:28.6px;color:#1e1e1e;font-weight:400;letter-spacing:0px;font-family:'Liberation Sans', sans-serif;transform:scaleX(0.9);transform-origin:right center;">0.22%</div>
<div style="position:absolute;left:29.0px;top:1176.7px;width:333.0px;height:53.2px;background:#ffffff;"></div>
<div style="position:absolute;left:362.0px;top:1176.7px;width:155.0px;height:53.2px;background:#fdd8dc;"></div>
<div style="position:absolute;left:517.0px;top:1176.7px;width:201.0px;height:53.2px;background:#c1e7fa;"></div>
<div style="position:absolute;left:718.0px;top:1176.7px;width:123.5px;height:53.2px;background:#f0f9f3;"></div>
<div style="position:absolute;left:841.5px;top:1176.7px;width:204.5px;height:53.2px;background:#e2f3f7;"></div>
<div style="position:absolute;left:1046.0px;top:1176.7px;width:97.4px;height:53.2px;background:#ede8f5;"></div>
<div style="position:absolute;left:1143.4px;top:1176.7px;width:105.6px;height:53.2px;background:#feeced;"></div>
<div style="position:absolute;left:1249.0px;top:1176.7px;width:95.0px;height:53.2px;background:#fafcfb;"></div>
<div style="position:absolute;left:29.0px;top:1229.9px;width:1315.0px;height:2.0px;background:#f0f0f0;"></div>
<svg style="position:absolute;left:42px;top:1197.3px" width="22" height="22" viewBox="0 0 22 22"><rect x="1" y="1" width="19" height="19" rx="2.5" fill="none" stroke="#7a7a7a" stroke-width="1.6"/><path d="M10.5 4.9 V16.1 M4.9 10.5 H16.1" stroke="#666" stroke-width="1.5"/></svg>
<div class="t" style="left:81.5px;top:1191.0px;font-size:28.6px;color:#1e1e1e;font-weight:400;letter-spacing:0px;font-family:'Liberation Sans', sans-serif;transform:scaleX(0.955);transform-origin:left center;">Campaign 10</div>
<div class="t" style="right:2052.5px;top:1191.0px;font-size:28.6px;color:#1e1e1e;font-weight:400;letter-spacing:0px;font-family:'Liberation Sans', sans-serif;transform:scaleX(0.89);transform-origin:right center;">1.33K</div>
<div class="t" style="right:1851.5px;top:1191.0px;font-size:28.6px;color:#1e1e1e;font-weight:400;letter-spacing:0px;font-family:'Liberation Sans', sans-serif;transform:scaleX(0.89);transform-origin:right center;">393.62K</div>
<div class="t" style="right:1728.0px;top:1191.0px;font-size:28.6px;color:#1e1e1e;font-weight:400;letter-spacing:0px;font-family:'Liberation Sans', sans-serif;transform:scaleX(0.89);transform-origin:right center;">1.17K</div>
<div class="t" style="right:1523.5px;top:1191.0px;font-size:28.6px;color:#1e1e1e;font-weight:400;letter-spacing:0px;font-family:'Liberation Sans', sans-serif;transform:scaleX(0.89);transform-origin:right center;">1.14K</div>
<div class="t" style="right:1426.1px;top:1191.0px;font-size:28.6px;color:#1e1e1e;font-weight:400;letter-spacing:0px;font-family:'Liberation Sans', sans-serif;transform:scaleX(0.89);transform-origin:right center;">3.38</div>
<div class="t" style="right:1320.5px;top:1191.0px;font-size:28.6px;color:#1e1e1e;font-weight:400;letter-spacing:0px;font-family:'Liberation Sans', sans-serif;transform:scaleX(0.89);transform-origin:right center;">1.14</div>
<div class="t" style="right:1226.0px;top:1191.0px;font-size:28.6px;color:#1e1e1e;font-weight:400;letter-spacing:0px;font-family:'Liberation Sans', sans-serif;transform:scaleX(0.9);transform-origin:right center;">0.30%</div>
<div style="position:absolute;left:29.0px;top:1231.9px;width:333.0px;height:53.2px;background:#f9f9f9;"></div>
<div style="position:absolute;left:362.0px;top:1231.9px;width:155.0px;height:53.2px;background:#fdd8dc;"></div>
<div style="position:absolute;left:517.0px;top:1231.9px;width:201.0px;height:53.2px;background:#b4e0f8;"></div>
<div style="position:absolute;left:718.0px;top:1231.9px;width:123.5px;height:53.2px;background:#f3faf5;"></div>
<div style="position:absolute;left:841.5px;top:1231.9px;width:204.5px;height:53.2px;background:#eaf6f9;"></div>
<div style="position:absolute;left:1046.0px;top:1231.9px;width:97.4px;height:53.2px;background:#efebf6;"></div>
<div style="position:absolute;left:1143.4px;top:1231.9px;width:105.6px;height:53.2px;background:#fde6e7;"></div>
<div style="position:absolute;left:1249.0px;top:1231.9px;width:95.0px;height:53.2px;background:#ffffff;"></div>
<div style="position:absolute;left:29.0px;top:1285.1px;width:1315.0px;height:2.0px;background:#f0f0f0;"></div>
<svg style="position:absolute;left:42px;top:1252.5px" width="22" height="22" viewBox="0 0 22 22"><rect x="1" y="1" width="19" height="19" rx="2.5" fill="none" stroke="#7a7a7a" stroke-width="1.6"/><path d="M10.5 4.9 V16.1 M4.9 10.5 H16.1" stroke="#666" stroke-width="1.5"/></svg>
<div class="t" style="left:81.5px;top:1246.2px;font-size:28.6px;color:#1e1e1e;font-weight:400;letter-spacing:0px;font-family:'Liberation Sans', sans-serif;transform:scaleX(0.955);transform-origin:left center;">Campaign 2</div>
<div class="t" style="right:2052.5px;top:1246.2px;font-size:28.6px;color:#1e1e1e;font-weight:400;letter-spacing:0px;font-family:'Liberation Sans', sans-serif;transform:scaleX(0.89);transform-origin:right center;">1.32K</div>
<div class="t" style="right:1851.5px;top:1246.2px;font-size:28.6px;color:#1e1e1e;font-weight:400;letter-spacing:0px;font-family:'Liberation Sans', sans-serif;transform:scaleX(0.89);transform-origin:right center;">457.99K</div>
<div class="t" style="right:1728.0px;top:1246.2px;font-size:28.6px;color:#1e1e1e;font-weight:400;letter-spacing:0px;font-family:'Liberation Sans', sans-serif;transform:scaleX(0.89);transform-origin:right center;">846</div>
<div class="t" style="right:1523.5px;top:1246.2px;font-size:28.6px;color:#1e1e1e;font-weight:400;letter-spacing:0px;font-family:'Liberation Sans', sans-serif;transform:scaleX(0.89);transform-origin:right center;">829</div>
<div class="t" style="right:1426.1px;top:1246.2px;font-size:28.6px;color:#1e1e1e;font-weight:400;letter-spacing:0px;font-family:'Liberation Sans', sans-serif;transform:scaleX(0.89);transform-origin:right center;">2.87</div>
<div class="t" style="right:1320.5px;top:1246.2px;font-size:28.6px;color:#1e1e1e;font-weight:400;letter-spacing:0px;font-family:'Liberation Sans', sans-serif;transform:scaleX(0.89);transform-origin:right center;">1.56</div>
<div class="t" style="right:1226.0px;top:1246.2px;font-size:28.6px;color:#1e1e1e;font-weight:400;letter-spacing:0px;font-family:'Liberation Sans', sans-serif;transform:scaleX(0.9);transform-origin:right center;">0.18%</div>
<div style="position:absolute;left:29.0px;top:1287.1px;width:333.0px;height:53.2px;background:#ffffff;"></div>
<div style="position:absolute;left:362.0px;top:1287.1px;width:155.0px;height:53.2px;background:#fdd8dc;"></div>
<div style="position:absolute;left:517.0px;top:1287.1px;width:201.0px;height:53.2px;background:#f7fbfe;"></div>
<div style="position:absolute;left:718.0px;top:1287.1px;width:123.5px;height:53.2px;background:#ffffff;"></div>
<div style="position:absolute;left:841.5px;top:1287.1px;width:204.5px;height:53.2px;background:#ffffff;"></div>
<div style="position:absolute;left:1046.0px;top:1287.1px;width:97.4px;height:53.2px;background:#c1b0dd;"></div>
<div style="position:absolute;left:1143.4px;top:1287.1px;width:105.6px;height:53.2px;background:#fbb4b6;"></div>
<div style="position:absolute;left:1249.0px;top:1287.1px;width:95.0px;height:53.2px;background:#ffffff;"></div>
<div style="position:absolute;left:29.0px;top:1340.3px;width:1315.0px;height:2.0px;background:#f0f0f0;"></div>
<svg style="position:absolute;left:42px;top:1307.7px" width="22" height="22" viewBox="0 0 22 22"><rect x="1" y="1" width="19" height="19" rx="2.5" fill="none" stroke="#7a7a7a" stroke-width="1.6"/><path d="M10.5 4.9 V16.1 M4.9 10.5 H16.1" stroke="#666" stroke-width="1.5"/></svg>
<div class="t" style="left:81.5px;top:1301.4px;font-size:28.6px;color:#1e1e1e;font-weight:400;letter-spacing:0px;font-family:'Liberation Sans', sans-serif;transform:scaleX(0.955);transform-origin:left center;">Campaign 7</div>
<div class="t" style="right:2052.5px;top:1301.4px;font-size:28.6px;color:#1e1e1e;font-weight:400;letter-spacing:0px;font-family:'Liberation Sans', sans-serif;transform:scaleX(0.89);transform-origin:right center;">1.12K</div>
<div class="t" style="right:1851.5px;top:1301.4px;font-size:28.6px;color:#1e1e1e;font-weight:400;letter-spacing:0px;font-family:'Liberation Sans', sans-serif;transform:scaleX(0.89);transform-origin:right center;">111.81K</div>
<div class="t" style="right:1728.0px;top:1301.4px;font-size:28.6px;color:#1e1e1e;font-weight:400;letter-spacing:0px;font-family:'Liberation Sans', sans-serif;transform:scaleX(0.89);transform-origin:right center;">210</div>
<div class="t" style="right:1523.5px;top:1301.4px;font-size:28.6px;color:#1e1e1e;font-weight:400;letter-spacing:0px;font-family:'Liberation Sans', sans-serif;transform:scaleX(0.89);transform-origin:right center;">207</div>
<div class="t" style="right:1426.1px;top:1301.4px;font-size:28.6px;color:#1e1e1e;font-weight:400;letter-spacing:0px;font-family:'Liberation Sans', sans-serif;transform:scaleX(0.89);transform-origin:right center;">10.01</div>
<div class="t" style="right:1320.5px;top:1301.4px;font-size:28.6px;color:#1e1e1e;font-weight:400;letter-spacing:0px;font-family:'Liberation Sans', sans-serif;transform:scaleX(0.89);transform-origin:right center;">5.33</div>
<div class="t" style="right:1226.0px;top:1301.4px;font-size:28.6px;color:#1e1e1e;font-weight:400;letter-spacing:0px;font-family:'Liberation Sans', sans-serif;transform:scaleX(0.9);transform-origin:right center;">0.19%</div>
<div style="position:absolute;left:29.0px;top:1342.3px;width:333.0px;height:13.7px;background:#f9f9f9;"></div>
<div style="position:absolute;left:362.0px;top:1342.3px;width:155.0px;height:13.7px;background:#ffffff;"></div>
<div style="position:absolute;left:517.0px;top:1342.3px;width:201.0px;height:13.7px;background:#d8effa;"></div>
<div style="position:absolute;left:718.0px;top:1342.3px;width:123.5px;height:13.7px;background:#a5d9b0;"></div>
<div style="position:absolute;left:841.5px;top:1342.3px;width:204.5px;height:13.7px;background:#66c3d6;"></div>
<div style="position:absolute;left:1046.0px;top:1342.3px;width:97.4px;height:13.7px;background:#ffffff;"></div>
<div style="position:absolute;left:1143.4px;top:1342.3px;width:105.6px;height:13.7px;background:#ffffff;"></div>
<div style="position:absolute;left:1249.0px;top:1342.3px;width:95.0px;height:13.7px;background:#a5d9b0;"></div>
<div style="position:absolute;left:1363.6px;top:775.0px;width:11.4px;height:540.0px;border-radius:6px;background:#a6a6a6;"></div>
</div>
<div style="position:absolute;left:2076.0px;top:134.7px;width:455.6px;height:967.3px;background:#fff;border:2px solid #c6dbea;border-radius:22px;box-sizing:border-box;"></div>
<div class="t" style="left:2105.8px;top:183.9px;font-size:21px;color:#252423;font-weight:400;letter-spacing:0.4px;font-family:'Liberation Sans', sans-serif;-webkit-text-stroke:0.7px #252423;">Report date</div>
<div style="position:absolute;left:2105.2px;top:219.6px;width:193.2px;height:53.7px;border:2px solid #e6e6e6;box-sizing:border-box;"></div>
<div style="position:absolute;left:2309.8px;top:219.6px;width:193.8px;height:53.7px;border:2px solid #e6e6e6;box-sizing:border-box;"></div>
<div class="t" style="left:2121.4px;top:236.6px;font-size:24px;color:#252423;font-weight:400;letter-spacing:0px;font-family:'Liberation Sans', sans-serif;">3/10/2025</div>
<div class="t" style="left:2325.3px;top:236.6px;font-size:24px;color:#252423;font-weight:400;letter-spacing:0px;font-family:'Liberation Sans', sans-serif;">4/8/2025</div>
<svg style="position:absolute;left:2271px;top:237px" width="18" height="18" viewBox="0 0 18 18"><rect x="1.2" y="1.8" width="14.8" height="14" rx="2.5" fill="none" stroke="#333" stroke-width="1.5"/><path d="M1.5 5.6 H15.8" stroke="#333" stroke-width="1.5"/><g fill="#333"><rect x="4.3" y="8" width="1.8" height="1.8"/><rect x="7.7" y="8" width="1.8" height="1.8"/><rect x="11.1" y="8" width="1.8" height="1.8"/><rect x="4.3" y="11.5" width="1.8" height="1.8"/><rect x="7.7" y="11.5" width="1.8" height="1.8"/></g></svg>
<svg style="position:absolute;left:2475.5px;top:237px" width="18" height="18" viewBox="0 0 18 18"><rect x="1.2" y="1.8" width="14.8" height="14" rx="2.5" fill="none" stroke="#333" stroke-width="1.5"/><path d="M1.5 5.6 H15.8" stroke="#333" stroke-width="1.5"/><g fill="#333"><rect x="4.3" y="8" width="1.8" height="1.8"/><rect x="7.7" y="8" width="1.8" height="1.8"/><rect x="11.1" y="8" width="1.8" height="1.8"/><rect x="4.3" y="11.5" width="1.8" height="1.8"/><rect x="7.7" y="11.5" width="1.8" height="1.8"/></g></svg>
<div style="position:absolute;left:2128.0px;top:306.8px;width:172.0px;height:5.0px;background:#efefef;border-radius:3px;"></div>
<div style="position:absolute;left:2313.0px;top:307.0px;width:169.0px;height:5.0px;background:#0f5fb3;"></div>
<div style="position:absolute;left:2290.6px;top:287.1px;width:45.0px;height:45.0px;border-radius:50%;background:#fff;border:4.2px solid #0c5eb3;box-sizing:border-box;"></div>
<div style="position:absolute;left:2459.7px;top:287.1px;width:45.0px;height:45.0px;border-radius:50%;background:#fff;border:4.2px solid #0c5eb3;box-sizing:border-box;"></div>
<div class="t" style="left:2105.8px;top:374.8px;font-size:23px;color:#252423;font-weight:400;letter-spacing:0.5px;font-family:'Liberation Sans', sans-serif;-webkit-text-stroke:0.7px #252423;">Account name</div>
<div style="position:absolute;left:2105.2px;top:418.7px;width:23.8px;height:23.2px;border:1.8px solid #707070;box-sizing:border-box;background:#fff;"></div>
<div class="t" style="left:2143.8px;top:420.5px;font-size:23px;color:#252423;font-weight:400;letter-spacing:0px;font-family:'Liberation Sans', sans-serif;">Account 1</div>
<div style="position:absolute;left:2105.2px;top:470.4px;width:23.8px;height:23.2px;border:1.8px solid #707070;box-sizing:border-box;background:#fff;"></div>
<div class="t" style="left:2143.8px;top:472.2px;font-size:23px;color:#252423;font-weight:400;letter-spacing:0px;font-family:'Liberation Sans', sans-serif;">Account 2</div>
<div class="t" style="left:2105.5px;top:604.7px;font-size:23px;color:#252423;font-weight:400;letter-spacing:0.5px;font-family:'Liberation Sans', sans-serif;-webkit-text-stroke:0.7px #252423;">Campaign name</div>
<div style="position:absolute;left:2105.5px;top:647.9px;width:23.8px;height:23.2px;border:1.8px solid #707070;box-sizing:border-box;background:#fff;"></div>
<div class="t" style="left:2143.7px;top:649.7px;font-size:23px;color:#252423;font-weight:400;letter-spacing:-0.2px;font-family:'Liberation Sans', sans-serif;">Campaign 10</div>
<div style="position:absolute;left:2105.5px;top:699.4px;width:23.8px;height:23.2px;border:1.8px solid #707070;box-sizing:border-box;background:#fff;"></div>
<div class="t" style="left:2143.7px;top:701.3px;font-size:23px;color:#252423;font-weight:400;letter-spacing:-0.2px;font-family:'Liberation Sans', sans-serif;">Campaign 11</div>
<div style="position:absolute;left:2105.5px;top:751.0px;width:23.8px;height:23.2px;border:1.8px solid #707070;box-sizing:border-box;background:#fff;"></div>
<div class="t" style="left:2143.7px;top:752.8px;font-size:23px;color:#252423;font-weight:400;letter-spacing:-0.2px;font-family:'Liberation Sans', sans-serif;">Campaign 2</div>
<div style="position:absolute;left:2504.3px;top:633.3px;width:13.7px;height:44.0px;background:#8a8a8a;"></div>
<div class="t" style="left:2107.0px;top:869.0px;font-size:23px;color:#252423;font-weight:400;letter-spacing:0.5px;font-family:'Liberation Sans', sans-serif;-webkit-text-stroke:0.7px #252423;">Ad set name</div>
<div style="position:absolute;left:2107.0px;top:913.3px;width:23.8px;height:23.2px;border:1.8px solid #707070;box-sizing:border-box;background:#fff;"></div>
<div class="t" style="left:2145.6px;top:915.1px;font-size:23px;color:#252423;font-weight:400;letter-spacing:0px;font-family:'Liberation Sans', sans-serif;">Ad set 10</div>
<div style="position:absolute;left:2107.0px;top:964.8px;width:23.8px;height:23.2px;border:1.8px solid #707070;box-sizing:border-box;background:#fff;"></div>
<div class="t" style="left:2145.6px;top:966.7px;font-size:23px;color:#252423;font-weight:400;letter-spacing:0px;font-family:'Liberation Sans', sans-serif;">Ad set 11</div>
<div style="position:absolute;left:2107.0px;top:1016.4px;width:23.8px;height:23.2px;border:1.8px solid #707070;box-sizing:border-box;background:#fff;"></div>
<div class="t" style="left:2145.6px;top:1018.2px;font-size:23px;color:#252423;font-weight:400;letter-spacing:0px;font-family:'Liberation Sans', sans-serif;">Ad set 12</div>
<div style="position:absolute;left:2506.6px;top:898.0px;width:14.1px;height:40.0px;background:#8a8a8a;"></div>
<div style="position:absolute;left:2076.0px;top:1123.2px;width:455.0px;height:236.5px;background:#fff;border:2px solid #cbbfea;border-radius:22px;box-sizing:border-box;"></div>
<div class="t" style="left:2103.8px;top:1158.7px;font-size:30.5px;color:#1a1a1a;font-weight:400;letter-spacing:0.85px;font-family:'Liberation Sans', sans-serif;">Have questions?</div>
<div class="t" style="left:2104.5px;top:1212.0px;font-size:27px;color:#0f6e9b;font-weight:400;letter-spacing:0px;font-family:'Liberation Sans', sans-serif;">Dashboard setup guide</div>
<div class="t" style="left:2104.5px;top:1254.9px;font-size:27px;color:#0f6e9b;font-weight:400;letter-spacing:0.3px;font-family:'Liberation Sans', sans-serif;">Book a demo</div>
<div class="t" style="left:2104.5px;top:1297.5px;font-size:27px;color:#0f6e9b;font-weight:400;letter-spacing:0.5px;font-family:'Liberation Sans', sans-serif;">Contact support</div>
<svg style="position:absolute;left:2410px;top:1150px" width="100" height="100" viewBox="0 0 100 100">
<defs><clipPath id="av"><circle cx="50.3" cy="51.4" r="42.3"/></clipPath>
<linearGradient id="avbg" x1="0" y1="0" x2="1" y2="0"><stop offset="0" stop-color="#ebe7da"/><stop offset="0.4" stop-color="#e4e0d0"/><stop offset="0.6" stop-color="#f3f0e6"/><stop offset="1" stop-color="#f7f5ee"/></linearGradient></defs>
<g clip-path="url(#av)">
<rect x="0" y="0" width="100" height="100" fill="url(#avbg)"/>
<path d="M28 38 C30 30 38 27 44 31 L45 62 L26 72 Z" fill="#d9d4c3" opacity="0.75"/>
<path d="M49 46 L47.5 58 L58 68 L66 57 L65 48 Z" fill="#c99f86"/>
<path d="M14 100 C17 74 30 60 45 55.5 L58 67 L67 56 C79 60 87 70 90 100 Z" fill="#d5d9e0"/>
<path d="M57.5 66 L58 100" stroke="#b7c3d3" stroke-width="1.4"/>
<ellipse cx="59.5" cy="36" rx="9.8" ry="12" fill="#d8a98c"/>
<ellipse cx="49.5" cy="38" rx="2.6" ry="4" fill="#cf9d80"/>
<path d="M48.5 38 C48.5 50 53 53.5 60 53.5 C67 53 70.2 48 70 40 C67 44 63 45 59.5 44 C54.5 45 51 42 48.5 38 Z" fill="#3a2619"/>
<path d="M44.5 34 C43.5 22 50 16 58 16 C65 16 69.5 21 68.5 29 C65 27.5 60 27 55 28 C51 29 49.5 31.5 49 36 Z" fill="#2b1f19"/>
</g></svg>
<svg style="position:absolute;left:2478px;top:1220px" width="27" height="27" viewBox="0 0 27 27">
<circle cx="13.25" cy="12.6" r="11.5" fill="#1f9e3c" stroke="#fff" stroke-width="2"/>
<path d="M7.5 13.2 L11.6 17.2 L19 9.5" fill="none" stroke="#fff" stroke-width="3" stroke-linecap="round" stroke-linejoin="round"/></svg>
<svg style="position:absolute;left:2426px;top:1300px" width="80" height="28" viewBox="0 0 80 28">
<rect x="2" y="3.2" width="30.5" height="21.1" rx="5" fill="#ff0000"/>
<path d="M13.8 8.6 L22.8 13.75 L13.8 18.9 Z" fill="#fff"/>
<g fill="none" stroke="#106a99" stroke-width="1.9">
<circle cx="59.1" cy="13.9" r="12.2"/>
<ellipse cx="59.1" cy="13.9" rx="4.5" ry="12.2"/>
<path d="M47.5 9.7 H70.7 M47.5 17.9 H70.7"/>
</g></svg>
<div style="position:absolute;left:28.0px;top:1383.4px;width:2503.0px;height:86.6px;border-radius:22px;background:linear-gradient(90deg,#26126a 0%,#3d1a7e 35%,#5a2898 70%,#6630a6 100%);"></div>
<div style="position:absolute;left:28.0px;top:1383.4px;width:2503.0px;height:86.6px;border-radius:22px;background:linear-gradient(180deg,rgba(255,255,255,0.06) 0%,rgba(20,5,60,0.35) 70%,rgba(20,5,60,0.45) 100%);"></div>
<div class="t" style="left:706.7px;width:1200px;text-align:center;top:1398.0px;font-size:28.4px;color:#ffffff;font-weight:400;letter-spacing:0px;font-family:'Liberation Sans', sans-serif;">Connect 70+ data sources with Coupler.io</div>
<svg style="position:absolute;left:0;top:0" width="2560" height="1440" viewBox="0 0 2560 1440">
<line x1="797" y1="357.5" x2="1307" y2="357.5" stroke="#d3d3d3" stroke-width="2" stroke-dasharray="2 6.75"/>
<line x1="797" y1="485.5" x2="1307" y2="485.5" stroke="#d3d3d3" stroke-width="2" stroke-dasharray="2 6.75"/>
<line x1="797" y1="613.8" x2="1307" y2="613.8" stroke="#d3d3d3" stroke-width="2" stroke-dasharray="2 6.75"/>
<line x1="1298" y1="292.7" x2="1307" y2="292.7" stroke="#d3d3d3" stroke-width="2" stroke-dasharray="2 6.75"/>
<line x1="1298" y1="389.6" x2="1307" y2="389.6" stroke="#d3d3d3" stroke-width="2" stroke-dasharray="2 6.75"/>
<line x1="1298" y1="582" x2="1307" y2="582" stroke="#d3d3d3" stroke-width="2" stroke-dasharray="2 6.75"/>
<line x1="1298" y1="678" x2="1307" y2="678" stroke="#d3d3d3" stroke-width="2" stroke-dasharray="2 6.75"/>
<line x1="1028.4" y1="296" x2="1028.4" y2="681" stroke="#d3d3d3" stroke-width="2" stroke-dasharray="2 6.75"/>
<line x1="1257.8" y1="296" x2="1257.8" y2="681" stroke="#d3d3d3" stroke-width="2" stroke-dasharray="2 6.75"/>
<polyline points="815.1,462.4 831.5,557.7 847.9,653.2 864.2,620.4 880.6,602.2 897.0,449.1 913.4,455.2 929.8,469.7 946.1,522.0 962.5,577.9 978.9,595.6 995.3,584.0 1011.7,410.2 1028.0,404.1 1044.4,385.4 1060.8,489.0 1077.2,592.5 1093.6,588.8 1109.9,560.9 1126.3,352.4 1142.7,393.8 1159.1,371.3 1175.5,468.0 1191.8,565.7 1208.2,573.0 1224.6,568.2 1241.0,434.0 1257.4,447.9 1273.7,444.2 1290.1,513.0" fill="none" stroke="#0b64b4" stroke-width="5" stroke-linejoin="round" stroke-linecap="round"/>
<polyline points="815.1,404.1 831.5,410.2 847.9,466.6 864.2,479.5 880.6,502.5 897.0,605.8 913.4,570.1 929.8,395.6 946.1,472.2 962.5,507.4 978.9,522.0 995.3,531.7 1011.7,611.9 1028.0,624.0 1044.4,473.4 1060.8,461.2 1077.2,535.3 1093.6,533.6 1109.9,528.0 1126.3,662.9 1142.7,664.9 1159.1,489.2 1175.5,441.8 1191.8,540.2 1208.2,547.5 1224.6,523.2 1241.0,619.2 1257.4,592.5 1273.7,422.3 1290.1,517.0" fill="none" stroke="#2eaeef" stroke-width="5" stroke-linejoin="round" stroke-linecap="round"/>
<line x1="1470" y1="293" x2="1990" y2="293" stroke="#d3d3d3" stroke-width="2" stroke-dasharray="2 6.75"/>
<line x1="1470" y1="448.6" x2="1990" y2="448.6" stroke="#d3d3d3" stroke-width="2" stroke-dasharray="2 6.75"/>
<line x1="1470" y1="604.4" x2="1990" y2="604.4" stroke="#d3d3d3" stroke-width="2" stroke-dasharray="2 6.75"/>
<line x1="1978" y1="403.8" x2="1990" y2="403.8" stroke="#d3d3d3" stroke-width="2" stroke-dasharray="2 6.75"/>
<line x1="1978" y1="514.4" x2="1990" y2="514.4" stroke="#d3d3d3" stroke-width="2" stroke-dasharray="2 6.75"/>
<line x1="1978" y1="625" x2="1990" y2="625" stroke="#d3d3d3" stroke-width="2" stroke-dasharray="2 6.75"/>
<line x1="1705.5" y1="294" x2="1705.5" y2="684" stroke="#d3d3d3" stroke-width="2" stroke-dasharray="2 6.75"/>
<line x1="1937.2" y1="294" x2="1937.2" y2="684" stroke="#d3d3d3" stroke-width="2" stroke-dasharray="2 6.75"/>
<polyline points="1489.2,587.8 1505.8,565.6 1522.3,637.0 1538.9,640.6 1555.4,553.0 1572.0,327.8 1588.6,330.0 1605.1,547.2 1621.7,536.1 1638.2,587.0 1654.8,609.2 1671.4,634.2 1687.9,306.4 1704.5,438.3 1721.0,433.6 1737.6,606.4 1754.2,537.0 1770.7,623.9 1787.3,651.7 1803.8,405.0 1820.4,377.8 1837.0,553.6 1853.5,457.8 1870.1,578.6 1886.6,539.7 1903.2,592.5 1919.8,304.4 1936.3,470.3 1952.9,517.5 1969.4,595.3" fill="none" stroke="#4e9060" stroke-width="5" stroke-linejoin="round" stroke-linecap="round"/>
<polyline points="1489.2,331.4 1505.8,441.1 1522.3,505.6 1538.9,482.8 1555.4,572.0 1572.0,662.0 1588.6,642.5 1605.1,374.4 1621.7,487.0 1638.2,514.7 1654.8,521.1 1671.4,495.3 1687.9,656.4 1704.5,592.5 1721.0,480.0 1737.6,373.1 1754.2,585.6 1770.7,507.8 1787.3,455.0 1803.8,614.7 1820.4,650.8 1837.0,365.6 1853.5,489.7 1870.1,535.6 1886.6,578.6 1903.2,516.1 1919.8,673.0 1936.3,574.4 1952.9,405.0 1969.4,464.7" fill="none" stroke="#f59898" stroke-width="5" stroke-linejoin="round" stroke-linecap="round"/>
<line x1="1470" y1="870.5" x2="2015" y2="870.5" stroke="#d3d3d3" stroke-width="2" stroke-dasharray="2 6.75"/>
<line x1="1470" y1="1042.7" x2="2015" y2="1042.7" stroke="#d3d3d3" stroke-width="2" stroke-dasharray="2 6.75"/>
<line x1="1470" y1="1214" x2="2015" y2="1214" stroke="#d3d3d3" stroke-width="2" stroke-dasharray="2 6.75"/>
<line x1="1595.8" y1="871" x2="1595.8" y2="1301" stroke="#d3d3d3" stroke-width="2" stroke-dasharray="2 6.75"/>
<line x1="1720.2" y1="871" x2="1720.2" y2="1301" stroke="#d3d3d3" stroke-width="2" stroke-dasharray="2 6.75"/>
<line x1="1843.3" y1="871" x2="1843.3" y2="1301" stroke="#d3d3d3" stroke-width="2" stroke-dasharray="2 6.75"/>
<line x1="1966.8" y1="871" x2="1966.8" y2="1301" stroke="#d3d3d3" stroke-width="2" stroke-dasharray="2 6.75"/>
<polyline points="1489.9,963.1 1507.5,1079.3 1525.2,1240.7 1542.8,1217.1 1560.4,1217.1 1578.1,1174.0 1595.7,1139.6 1613.3,961.8 1631.0,1100.8 1648.6,1197.7 1666.2,1227.8 1683.9,1225.7 1701.5,1144.7 1719.2,1153.8 1736.8,954.5 1754.4,1042.7 1772.1,1238.6 1789.7,1233.0 1807.3,1197.7 1825.0,1157.7 1842.6,1195.5 1860.2,958.8 1877.9,1019.0 1895.5,1217.1 1913.1,1230.0 1930.8,1202.0 1948.4,1174.9 1966.0,1156.8 1983.7,960.9 2001.3,1141.7" fill="none" stroke="#7350b6" stroke-width="5" stroke-linejoin="round" stroke-linecap="round"/>
</svg>
</div></body></html>
